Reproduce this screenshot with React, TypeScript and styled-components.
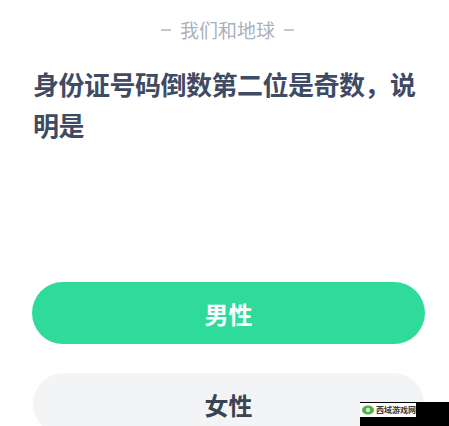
import React from "react";
import styled, { createGlobalStyle } from "styled-components";

const Global = createGlobalStyle`
  html, body { margin: 0; padding: 0; background: #ffffff; }
  body { font-family: "Noto Sans CJK SC", "Noto Sans", sans-serif; }
`;

const Page = styled.div`
  position: relative;
  width: 449px;
  height: 426px;
  overflow: hidden;
  background: #ffffff;
  padding: 18px 24px 0 32px;
  box-sizing: border-box;
  display: flex;
  flex-direction: column;
`;

const Header = styled.div`
  display: flex;
  justify-content: center;
  align-items: center;
  gap: 9px;
  height: 24px;
  font-size: 19px;
  line-height: 24px;
  color: #aab1bc;
  margin-right: 2px;
`;

const Dash = styled.span`
  display: block;
  width: 10px;
  height: 1.5px;
  background: #c3c8d0;
`;

const Question = styled.div`
  margin-top: 21px;
  padding-left: 1px;
  font-size: 26px;
  letter-spacing: -0.5px;
  line-height: 41px;
  font-weight: 700;
  color: #3f4b63;
`;

const Options = styled.div`
  margin-top: 137px;
  display: flex;
  flex-direction: column;
  gap: 29px;
`;

const Option = styled.div<{ $active?: boolean }>`
  height: 62px;
  border-radius: 31px;
  display: flex;
  align-items: center;
  justify-content: center;
  font-size: 24px;
  font-weight: 700;
  color: ${(p) => (p.$active ? "#ffffff" : "#3a4352")};
  background: ${(p) => (p.$active ? "#2edb9b" : "#f3f4f6")};
  margin: ${(p) => (p.$active ? "0" : "0 1px 0 1px")};
`;

const Watermark = styled.div`
  position: absolute;
  left: 360px;
  top: 402px;
  width: 89px;
  height: 24px;
  background: #000000;
`;

const Label = styled.div`
  display: flex;
  align-items: center;
  gap: 2px;
  width: 56px;
  height: 14px;
  background: #ffffff;
  margin-top: 1px;
  padding-left: 2px;
  box-sizing: border-box;
  font-size: 8px;
  line-height: 14px;
  font-weight: 700;
  color: #333a40;
  white-space: nowrap;
`;

export default function App() {
  return (
    <>
      <Global />
      <Page>
        <Header>
          <Dash />
          <span>我们和地球</span>
          <Dash />
        </Header>
        <Question>身份证号码倒数第二位是奇数，说明是</Question>
        <Options>
          <Option $active>男性</Option>
          <Option>女性</Option>
        </Options>
        <Watermark>
          <Label>
            <svg width="12" height="10" viewBox="0 0 12 10">
              <ellipse cx="6" cy="5" rx="6" ry="4.5" fill="#4cb04a" />
              <circle cx="6" cy="5" r="2.2" fill="#d8f0c0" />
            </svg>
            <span>西域游戏网</span>
          </Label>
        </Watermark>
      </Page>
    </>
  );
}
